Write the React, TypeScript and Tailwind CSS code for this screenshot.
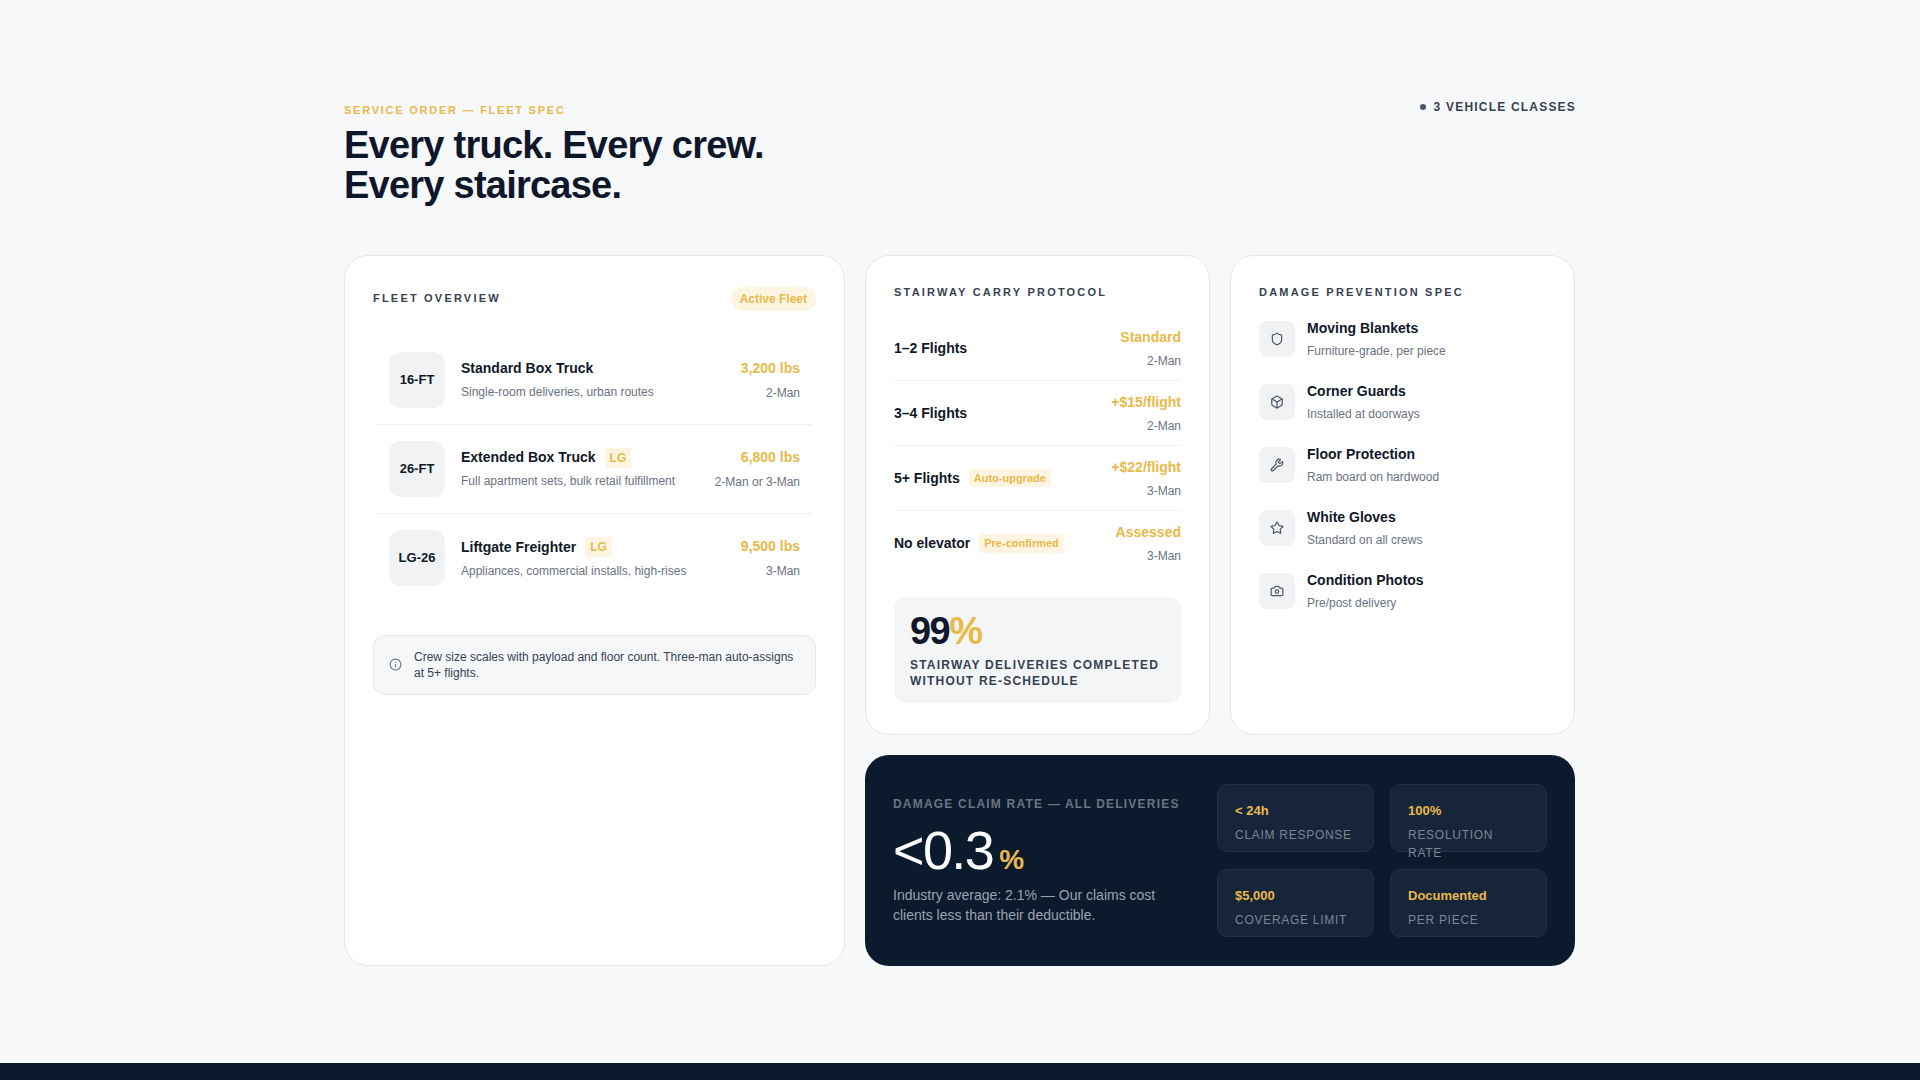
import { Shield, Box, Wrench, Star, Camera, Info } from "lucide-react";

const trucks = [
  { code: "16-FT", name: "Standard Box Truck", lg: false, desc: "Single-room deliveries, urban routes", lbs: "3,200 lbs", crew: "2-Man" },
  { code: "26-FT", name: "Extended Box Truck", lg: true, desc: "Full apartment sets, bulk retail fulfillment", lbs: "6,800 lbs", crew: "2-Man or 3-Man" },
  { code: "LG-26", name: "Liftgate Freighter", lg: true, desc: "Appliances, commercial installs, high-rises", lbs: "9,500 lbs", crew: "3-Man" },
];

const flights = [
  { label: "1–2 Flights", tag: "", price: "Standard", crew: "2-Man" },
  { label: "3–4 Flights", tag: "", price: "+$15/flight", crew: "2-Man" },
  { label: "5+ Flights", tag: "Auto-upgrade", price: "+$22/flight", crew: "3-Man" },
  { label: "No elevator", tag: "Pre-confirmed", price: "Assessed", crew: "3-Man" },
];

const specs = [
  { icon: Shield, title: "Moving Blankets", sub: "Furniture-grade, per piece" },
  { icon: Box, title: "Corner Guards", sub: "Installed at doorways" },
  { icon: Wrench, title: "Floor Protection", sub: "Ram board on hardwood" },
  { icon: Star, title: "White Gloves", sub: "Standard on all crews" },
  { icon: Camera, title: "Condition Photos", sub: "Pre/post delivery" },
];

const stats = [
  { v: "< 24h", l: "CLAIM RESPONSE" },
  { v: "100%", l: "RESOLUTION RATE" },
  { v: "$5,000", l: "COVERAGE LIMIT" },
  { v: "Documented", l: "PER PIECE" },
];

export default function App() {
  return (
    <div className="min-h-screen bg-[#f6f8fa] text-[#111827] flex flex-col" style={{ fontFamily: '"Liberation Sans", Arial, sans-serif' }}>
      <div className="w-[1232px] mx-auto pt-[98px] flex-1">
        {/* HEADER */}
        <div className="flex justify-between items-start">
          <div>
            <p className="text-[11px] font-bold tracking-[0.16em] text-[#e9b949] mt-[4px]">SERVICE ORDER — FLEET SPEC</p>
            <h1 className="mt-[6px] text-[38px] leading-[40px] font-bold tracking-[-0.02em] text-[#0f172a]">
              Every truck. Every crew.<br />Every staircase.
            </h1>
          </div>
          <div className="flex items-center gap-2 text-[12px] font-bold tracking-[0.1em] text-[#374151]">
            <span className="w-[6px] h-[6px] rounded-full bg-[#4b5563]" />
            3 VEHICLE CLASSES
          </div>
        </div>

        <div className="mt-[50px] grid grid-cols-[501px_345px_345px] gap-x-[20px] gap-y-[20px] grid-rows-[480px_211px]">
          {/* FLEET OVERVIEW */}
          <div className="row-span-2 bg-white border border-[#e5e7eb] rounded-[24px] px-[28px] pt-[31px]">
            <div className="flex justify-between items-center">
              <p className="text-[11px] font-bold tracking-[0.2em] text-[#374151]">FLEET OVERVIEW</p>
              <span className="px-[9px] py-[3px] rounded-full bg-[#fdf5e1] text-[#e9b949] text-[12px] font-bold">Active Fleet</span>
            </div>
            <div className="mt-[25px] px-[4px]">
              {trucks.map((t, i) => (
                <div key={t.code} className={`flex items-center px-[12px] h-[89px] ${i < 2 ? "border-b border-[#f0f1f3]" : ""}`}>
                  <div className="w-[56px] h-[56px] rounded-[12px] bg-[#f1f2f4] flex items-center justify-center text-[13px] font-bold text-[#111827]">{t.code}</div>
                  <div className="ml-[16px] flex-1">
                    <div className="flex items-center gap-[9px]">
                      <span className="text-[14px] font-bold">{t.name}</span>
                      {t.lg && <span className="px-[5px] py-[1px] bg-[#fdf5e1] text-[#e9b949] text-[12px] font-bold">LG</span>}
                    </div>
                    <p className="mt-[4px] text-[12px] text-[#6b7280]">{t.desc}</p>
                  </div>
                  <div className="text-right">
                    <p className="text-[14px] font-bold text-[#e9b949]">{t.lbs}</p>
                    <p className="mt-[5px] text-[12px] text-[#6b7280]">{t.crew}</p>
                  </div>
                </div>
              ))}
            </div>
            <div className="mt-[32px] rounded-[12px] bg-[#f6f7f9] border border-[#e5e7eb] px-[15px] py-[13px] flex gap-[12px] items-center">
              <Info size={13} className="text-[#6b7280] shrink-0" />
              <p className="text-[12px] leading-[16px] text-[#374151]">Crew size scales with payload and floor count. Three-man auto-assigns at 5+ flights.</p>
            </div>
          </div>

          {/* STAIRWAY */}
          <div className="bg-white border border-[#e5e7eb] rounded-[24px] px-[28px] pt-[28px]">
            <p className="text-[11px] font-bold tracking-[0.2em] text-[#374151]">STAIRWAY CARRY PROTOCOL</p>
            <div className="mt-[16px]">
              {flights.map((f, i) => (
                <div key={f.label} className={`flex items-center justify-between h-[65px] ${i < 3 ? "border-b border-[#f0f1f3]" : ""}`}>
                  <div className="flex items-center gap-[9px]">
                    <span className="text-[14px] font-bold">{f.label}</span>
                    {f.tag && <span className="px-[5px] py-[1px] rounded bg-[#fdf5e1] text-[#e9b949] text-[11px] font-bold">{f.tag}</span>}
                  </div>
                  <div className="text-right">
                    <p className="text-[14px] font-bold text-[#e9b949]">{f.price}</p>
                    <p className="mt-[4px] text-[12px] text-[#6b7280]">{f.crew}</p>
                  </div>
                </div>
              ))}
            </div>
            <div className="mt-[21px] rounded-[12px] bg-[#f4f5f7] px-[16px] py-[14px]">
              <p className="text-[38px] leading-[40px] font-bold tracking-[-0.04em] text-[#0f172a]">99<span className="text-[#e9b949]">%</span></p>
              <p className="mt-[6px] text-[12px] leading-[16px] font-bold tracking-[0.1em] text-[#374151]">STAIRWAY DELIVERIES COMPLETED WITHOUT RE-SCHEDULE</p>
            </div>
          </div>

          {/* DAMAGE PREVENTION */}
          <div className="bg-white border border-[#e5e7eb] rounded-[24px] px-[28px] pt-[28px]">
            <p className="text-[11px] font-bold tracking-[0.2em] text-[#374151]">DAMAGE PREVENTION SPEC</p>
            <div className="mt-[18px] flex flex-col gap-[21px]">
              {specs.map((s) => (
                <div key={s.title} className="flex items-center gap-[12px]">
                  <div className="w-[36px] h-[36px] rounded-[8px] bg-[#f1f2f4] flex items-center justify-center">
                    <s.icon size={14} className="text-[#4b5563]" />
                  </div>
                  <div>
                    <p className="text-[14px] font-bold">{s.title}</p>
                    <p className="mt-[3px] text-[12px] text-[#6b7280]">{s.sub}</p>
                  </div>
                </div>
              ))}
            </div>
          </div>

          {/* CLAIM RATE */}
          <div className="col-span-2 bg-[#0c1a2e] rounded-[24px] px-[28px] flex items-center justify-between">
            <div className="w-[300px]">
              <p className="text-[12px] font-bold tracking-[0.1em] text-[#6b7584]">DAMAGE CLAIM RATE — ALL DELIVERIES</p>
              <p className="mt-[10px] flex items-end gap-[6px] text-white">
                <span className="text-[54px] leading-[54px] tracking-[-0.03em]">&lt;0.3</span>
                <span className="text-[28px] leading-[34px] font-bold text-[#e9b949]">%</span>
              </p>
              <p className="mt-[8px] text-[14px] leading-[20px] text-[#9ca3af]">Industry average: 2.1% — Our claims cost clients less than their deductible.</p>
            </div>
            <div className="grid grid-cols-2 gap-x-[16px] gap-y-[17px]">
              {stats.map((s) => (
                <div key={s.l} className="w-[157px] h-[68px] rounded-[10px] bg-[#17253a] border border-[#223148] px-[17px] pt-[16px]">
                  <p className="text-[13px] font-bold text-[#e9b949]">{s.v}</p>
                  <p className="mt-[6px] text-[12px] tracking-[0.06em] text-[#7b8595]">{s.l}</p>
                </div>
              ))}
            </div>
          </div>
        </div>
      </div>
      <div className="h-[17px] bg-[#0c1a2e] mt-[96px]" />
    </div>
  );
}
